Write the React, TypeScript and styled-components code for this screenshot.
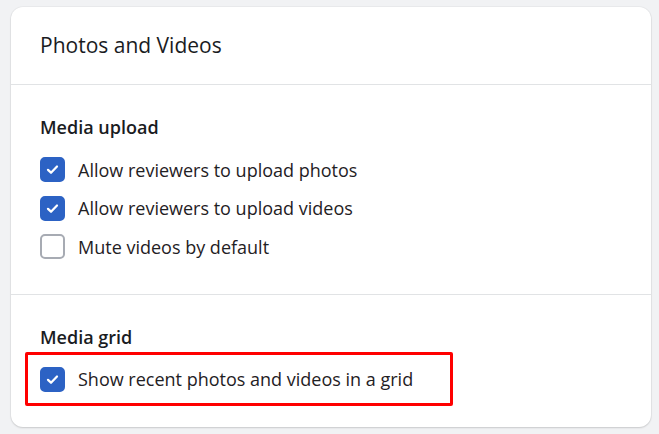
import React from "react";
import styled, { createGlobalStyle } from "styled-components";

const GlobalStyle = createGlobalStyle`
  html, body { margin: 0; padding: 0; }
  body {
    background: #f1f2f4;
    font-family: "Open Sans", "Noto Sans", Arial, sans-serif;
    color: #1f2124;
  }
  * { box-sizing: border-box; }
`;

const Page = styled.div`
  padding: 7px 8px 7px 11px;
  width: 659px;
  height: 434px;
`;

const Card = styled.section`
  width: 640px;
  height: 420px;
  background: #ffffff;
  border-radius: 12px;
  box-shadow: 0 1px 2px rgba(0, 0, 0, 0.14), 0 0 0 1px rgba(0, 0, 0, 0.03);
  display: flex;
  flex-direction: column;
  overflow: hidden;
`;

const Header = styled.header`
  height: 78px;
  padding: 0 29px;
  display: flex;
  align-items: center;
  border-bottom: 1px solid #e1e3e5;
`;

const Title = styled.h2`
  margin: 0;
  font-size: 21px;
  font-weight: 500;
  line-height: 24px;
  color: #1a1c1f;
`;

const Section = styled.div<{ $last?: boolean }>`
  padding: ${(p) => (p.$last ? "30px 29px 21px" : "30px 29px 28px")};
  border-bottom: ${(p) => (p.$last ? "none" : "1px solid #e1e3e5")};
  display: flex;
  flex-direction: column;
`;

const SectionTitle = styled.h3<{ $tight?: boolean }>`
  margin: 0 0 ${(p) => (p.$tight ? "0" : "12px")};
  font-size: 18px;
  font-weight: 600;
  line-height: 24px;
  color: #1a1c1f;
`;

const Row = styled.label`
  display: flex;
  align-items: center;
  gap: 13px;
  height: 38.5px;
  font-size: 18px;
  color: #1f2124;
  cursor: pointer;
`;

const Box = styled.span<{ $checked: boolean }>`
  flex: none;
  width: 25px;
  height: 25px;
  border-radius: 5px;
  display: flex;
  align-items: center;
  justify-content: center;
  background: ${(p) => (p.$checked ? "#2c62c4" : "#ffffff")};
  border: 2px solid ${(p) => (p.$checked ? "#2c62c4" : "#a7abb3")};
`;

const Highlight = styled.div`
  margin: 3px 0 0 -15px;
  width: 428px;
  height: 54px;
  border: 3px solid #ff0000;
  border-radius: 2px;
  padding: 0 12px;
  display: flex;
  align-items: center;
`;

const Check = () => (
  <svg width="15" height="15" viewBox="0 0 16 16" fill="none">
    <path
      d="M3.2 8.4 L6.4 11.4 L12.8 4.8"
      stroke="#ffffff"
      strokeWidth="2.4"
      strokeLinecap="round"
      strokeLinejoin="round"
    />
  </svg>
);

const Checkbox = ({ checked, label }: { checked: boolean; label: string }) => (
  <Row>
    <Box $checked={checked}>{checked && <Check />}</Box>
    <span>{label}</span>
  </Row>
);

export default function App() {
  return (
    <>
      <GlobalStyle />
      <Page>
        <Card>
          <Header>
            <Title>Photos and Videos</Title>
          </Header>
          <Section>
            <SectionTitle>Media upload</SectionTitle>
            <Checkbox checked label="Allow reviewers to upload photos" />
            <Checkbox checked label="Allow reviewers to upload videos" />
            <Checkbox checked={false} label="Mute videos by default" />
          </Section>
          <Section $last>
            <SectionTitle $tight>Media grid</SectionTitle>
            <Highlight>
              <Checkbox checked label="Show recent photos and videos in a grid" />
            </Highlight>
          </Section>
        </Card>
      </Page>
    </>
  );
}
